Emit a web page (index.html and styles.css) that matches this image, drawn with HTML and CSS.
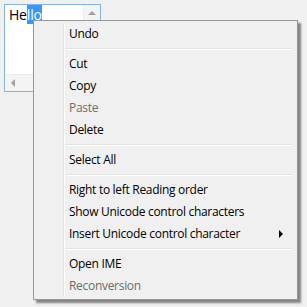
FILE: index.html
```html
<!DOCTYPE html>
<html lang="en">
<head>
  <meta charset="UTF-8" />
  <title>Context menu</title>
  <link rel="stylesheet" href="styles.css">
</head>
<body>

  <div class="textbox">
    <div class="text-area">He<span class="sel">llo</span></div>
    <div class="vscroll">
      <div class="arrow-btn"><span class="tri-up"></span></div>
    </div>
    <div class="hscroll">
      <div class="arrow-btn"><span class="tri-left"></span></div>
    </div>
    <div class="corner"></div>
  </div>

  <div class="menu">
    <div class="item">Undo</div>
    <div class="sep"></div>
    <div class="item">Cut</div>
    <div class="item">Copy</div>
    <div class="item disabled">Paste</div>
    <div class="item">Delete</div>
    <div class="sep"></div>
    <div class="item">Select All</div>
    <div class="sep"></div>
    <div class="item">Right to left Reading order</div>
    <div class="item">Show Unicode control characters</div>
    <div class="item has-sub">Insert Unicode control character <span class="sub-arrow"></span></div>
    <div class="sep"></div>
    <div class="item">Open IME</div>
    <div class="item disabled">Reconversion</div>
  </div>

</body>
</html>
```

FILE: styles.css
```css
html, body {
  margin: 0;
  padding: 0;
}
*, *::before, *::after {
  box-sizing: border-box;
}
body {
  font-family: 'Open Sans', 'Noto Sans', sans-serif;
  font-size: 12px;
  background: #f0f0f0;
  width: 307px;
  height: 307px;
  padding: 4px;
  position: relative;
  overflow: hidden;
}

/* text box */
.textbox {
  width: 97px;
  height: 88px;
  border: 1px solid #84b4e4;
  background: #fff;
  display: grid;
  grid-template-columns: 1fr 17px;
  grid-template-rows: 1fr 17px;
}
.text-area {
  padding: 2px 0 0 4px;
  font-size: 14px;
  line-height: 16px;
  letter-spacing: -0.2px;
  color: #000;
}
.sel {
  background: #3399ff;
  color: #fff;
}
.vscroll {
  background: #f4f4f4;
  border-left: 1px solid #ececec;
}
.hscroll {
  background: #f4f4f4;
  border-top: 1px solid #ececec;
}
.corner {
  background: #f0f0f0;
}
.arrow-btn {
  width: 16px;
  height: 16px;
  display: flex;
  align-items: center;
  justify-content: center;
}
.tri-up {
  width: 0;
  height: 0;
  border-left: 4px solid transparent;
  border-right: 4px solid transparent;
  border-bottom: 4px solid #a0a0a0;
}
.tri-left {
  width: 0;
  height: 0;
  border-top: 4px solid transparent;
  border-bottom: 4px solid transparent;
  border-right: 4px solid #a0a0a0;
}

/* context menu */
.menu {
  position: absolute;
  left: 33px;
  top: 20px;
  width: 265px;
  padding: 2px;
  background: #f0f0f0;
  border: 1px solid #979797;
  box-shadow: 3px 3px 2px rgba(0, 0, 0, 0.45);
}
.menu::before {
  content: "";
  position: absolute;
  left: 29px;
  top: 2px;
  bottom: 2px;
  width: 2px;
  border-left: 1px solid #e2e3e3;
  border-right: 1px solid #ffffff;
}
.item {
  position: relative;
  height: 22px;
  line-height: 22px;
  padding-left: 33px;
  color: #000;
  letter-spacing: -0.3px;
  white-space: nowrap;
}
.item.disabled {
  color: #6d6d6d;
}
.sep {
  position: relative;
  height: 8px;
  margin-left: 30px;
}
.sep::after {
  content: "";
  position: absolute;
  left: 0;
  right: 2px;
  top: 3px;
  height: 2px;
  border-top: 1px solid #e2e3e3;
  border-bottom: 1px solid #ffffff;
}
.sub-arrow {
  position: absolute;
  right: 12px;
  top: 7px;
  width: 0;
  height: 0;
  border-top: 4px solid transparent;
  border-bottom: 4px solid transparent;
  border-left: 4px solid #000;
}
```
